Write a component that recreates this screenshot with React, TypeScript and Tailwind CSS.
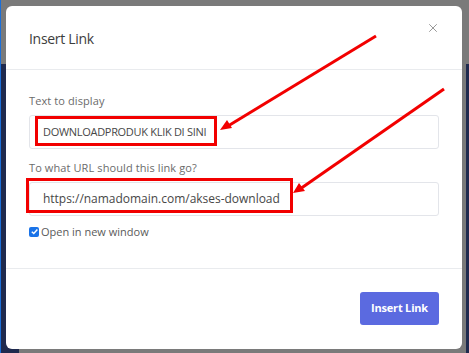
import { X } from "lucide-react";

const font = { fontFamily: '"Open Sans", "Noto Sans", sans-serif' };

function Field({ label, value, valueClass }: { label: string; value: string; valueClass: string }) {
  return (
    <div className="flex flex-col">
      <label className="text-[11px] leading-none text-[#6b6b6b] tracking-[0.1px]">{label}</label>
      <div className="mt-[9px] h-[34px] rounded-[3px] border border-[#e3e5ea] bg-white pl-[13px] flex items-center">
        <span className={`whitespace-nowrap text-[#474747] ${valueClass}`}>{value}</span>
      </div>
    </div>
  );
}

export default function App() {
  return (
    <div className="relative h-[353px] w-[469px] overflow-hidden bg-[#7a7a7a]" style={font}>
      {/* page behind the dimmed overlay */}
      <div className="flex h-full flex-col">
        <div className="h-[64px] border-l border-[#1a6ed8]" />
        <div className="flex flex-1">
          <div className="w-[19px] border-l border-[#1a6ed8] bg-[#1f2a4e]" />
          <div className="flex-1" />
          <div className="w-[3px] bg-[#1f2a4e]" />
        </div>
      </div>

      {/* modal */}
      <div className="absolute left-[6px] top-[6px] flex h-[343px] w-[456px] flex-col rounded-[6px] bg-white">
        <div className="flex h-[64px] items-start justify-between border-b border-[#e9ebee] pl-[23px] pr-[22px]">
          <h2 className="mt-[26px] text-[14px] leading-none tracking-[-0.3px] text-[#3d3d3d]">Insert Link</h2>
          <X className="mt-[15px] size-[14px] text-[#8a8a8a]" strokeWidth={1.5} />
        </div>

        <div className="flex h-[199px] flex-col border-b border-[#e9ebee] px-[23px] pt-[25px]">
          <Field label="Text to display" value="DOWNLOADPRODUK KLIK DI SINI" valueClass="text-[11px] tracking-[-0.3px]" />
          <div className="mt-[13px]">
            <Field label="To what URL should this link go?" value="https://namadomain.com/akses-download" valueClass="text-[12px] tracking-[-0.02px]" />
          </div>
          <div className="mt-[10px] flex items-center">
            <span className="flex size-[10px] items-center justify-center rounded-[2px] bg-[#1a73e8]">
              <svg viewBox="0 0 10 10" className="size-[9px]">
                <path d="M2 5.2 4.2 7.3 8.2 2.8" fill="none" stroke="white" strokeWidth="1.6" />
              </svg>
            </span>
            <span className="ml-[2px] text-[11px] leading-none text-[#5a5a5a]">Open in new window</span>
          </div>
        </div>

        <div className="flex flex-1 items-start justify-end pr-[23px] pt-[23px]">
          <button className="h-[33px] w-[79px] rounded-[3px] bg-[#5b6ae0] text-[11px] font-bold tracking-[-0.2px] text-white">
            Insert Link
          </button>
        </div>
      </div>

      {/* annotations */}
      <svg className="pointer-events-none absolute left-0 top-0" width="469" height="353">
        <rect x="36.5" y="117.5" width="179" height="27" fill="none" stroke="#f20000" strokeWidth="3" />
        <rect x="27.5" y="179.5" width="264" height="32" fill="none" stroke="#f20000" strokeWidth="3" />
        <line x1="376" y1="36" x2="228" y2="126" stroke="#f20000" strokeWidth="3" />
        <polygon points="220,130 227,120 232,128" fill="#f20000" />
        <line x1="444" y1="89" x2="300" y2="189" stroke="#f20000" strokeWidth="3" />
        <polygon points="293,193 299,183 305,191" fill="#f20000" />
      </svg>
    </div>
  );
}
